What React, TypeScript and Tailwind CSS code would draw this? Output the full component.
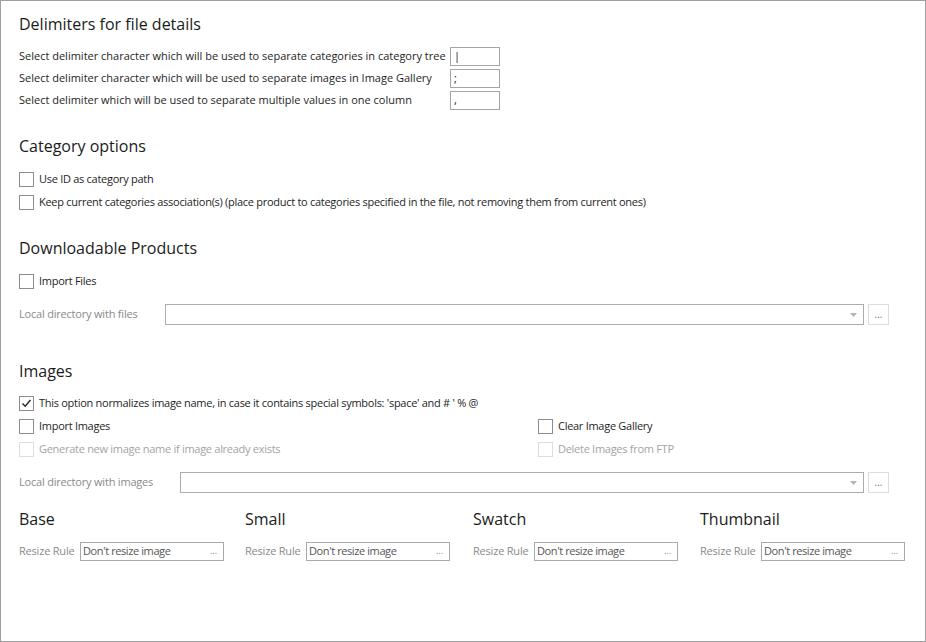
import React from "react";

const font = "font-['Segoe_UI','Open_Sans','Noto_Sans',sans-serif]";

const Heading = ({ children, className = "" }: { children: React.ReactNode; className?: string }) => (
  <div className={`h-[24px] flex items-center text-[16px] leading-none text-[#1b1b1b] ${className}`}>{children}</div>
);

const Checkbox = ({ checked = false, disabled = false }: { checked?: boolean; disabled?: boolean }) => (
  <div
    className={`w-[15px] h-[15px] border bg-white flex items-center justify-center shrink-0 ${
      disabled ? "border-[#dedede]" : "border-[#8c8c8c]"
    }`}
  >
    {checked && (
      <svg width="11" height="11" viewBox="0 0 11 11">
        <path d="M1.5 5.5 L4.2 8.3 L9.5 2" fill="none" stroke="#262626" strokeWidth="1.4" />
      </svg>
    )}
  </div>
);

const CheckRow = ({
  label,
  checked,
  disabled,
}: {
  label: string;
  checked?: boolean;
  disabled?: boolean;
}) => (
  <div className="h-[23px] flex items-center gap-[5px]">
    <Checkbox checked={checked} disabled={disabled} />
    <span
      className={`text-[11px] tracking-[-0.28px] whitespace-nowrap ${disabled ? "text-[#a3a3a3]" : "text-[#1e1e1e]"}`}
    >
      {label}
    </span>
  </div>
);

const DirRow = ({ label, labelWidth }: { label: string; labelWidth: string }) => (
  <div className="h-[21px] flex items-center">
    <span className={`${labelWidth} text-[11px] tracking-[-0.2px] text-[#8a8a8a] whitespace-nowrap shrink-0`}>{label}</span>
    <div className="flex-1 h-[21px] border border-[#acacac] bg-white flex items-center justify-end pr-[6px]">
      <svg width="7" height="4" viewBox="0 0 7 4">
        <path d="M0 0 H7 L3.5 4 Z" fill="#b4b4b4" />
      </svg>
    </div>
    <div className="ml-[4px] w-[21px] h-[21px] border border-[#dcdcdc] bg-white flex items-center justify-center text-[10px] text-[#7a7a7a] leading-none pb-[2px]">
      ...
    </div>
  </div>
);

const ResizeCol = ({ title }: { title: string }) => (
  <div className="flex flex-col">
    <Heading>{title}</Heading>
    <div className="mt-[11px] h-[19px] flex items-center">
      <span className="w-[61px] text-[11px] tracking-[-0.2px] text-[#8a8a8a] whitespace-nowrap">Resize Rule</span>
      <div className="w-[144px] h-[19px] border border-[#a9a9a9] bg-white flex items-center justify-between pl-[2px] pr-[6px]">
        <span className="text-[11px] tracking-[-0.4px] text-[#555555] whitespace-nowrap">Don't resize image</span>
        <span className="text-[9px] text-[#8a8a8a] leading-none pb-[2px]">...</span>
      </div>
    </div>
  </div>
);

export default function App() {
  const delimiters = [
    { label: "Select delimiter character which will be used to separate categories in category tree", value: "|" },
    { label: "Select delimiter character which will be used to separate images in Image Gallery", value: ";" },
    { label: "Select delimiter which will be used to separate multiple values in one column", value: "," },
  ];

  return (
    <div className={`w-[926px] h-[642px] bg-white border border-[#a0a0a0] ${font} overflow-hidden`}>
      <div className="pl-[18px] pr-[36px] pt-[11px] flex flex-col">
        <Heading>Delimiters for file details</Heading>

        <div className="mt-[9px] flex flex-col">
          {delimiters.map((d) => (
            <div key={d.label} className="h-[22px] flex items-center">
              <span className="w-[431px] text-[11px] text-[#1e1e1e] whitespace-nowrap">{d.label}</span>
              <div className="w-[50px] h-[19px] border border-[#a5a5a5] bg-white flex items-center pl-[3px] text-[11px] text-[#111]">
                {d.value}
              </div>
            </div>
          ))}
        </div>

        <Heading className="mt-[23px]">Category options</Heading>
        <div className="mt-[10px] flex flex-col">
          <CheckRow label="Use ID as category path" />
          <CheckRow label="Keep current categories association(s) (place product to categories specified in the file, not removing them from current ones)" />
        </div>

        <Heading className="mt-[22px]">Downloadable Products</Heading>
        <div className="mt-[10px]">
          <CheckRow label="Import Files" />
        </div>
        <div className="mt-[11px]">
          <DirRow label="Local directory with files" labelWidth="w-[146px]" />
        </div>

        <Heading className="mt-[34px]">Images</Heading>
        <div className="mt-[9px] flex flex-col">
          <CheckRow label="This option normalizes image name, in case it contains special symbols: 'space' and # ' % @" checked />
          <div className="flex">
            <div className="w-[519px] flex flex-col">
              <CheckRow label="Import Images" />
              <CheckRow label="Generate new image name if image already exists" disabled />
            </div>
            <div className="flex flex-col">
              <CheckRow label="Clear Image Gallery" />
              <CheckRow label="Delete Images from FTP" disabled />
            </div>
          </div>
        </div>
        <div className="mt-[11px]">
          <DirRow label="Local directory with images" labelWidth="w-[161px]" />
        </div>

        <div className="mt-[14px] grid grid-cols-[226px_228px_227px_1fr]">
          <ResizeCol title="Base" />
          <ResizeCol title="Small" />
          <ResizeCol title="Swatch" />
          <ResizeCol title="Thumbnail" />
        </div>
      </div>
    </div>
  );
}
